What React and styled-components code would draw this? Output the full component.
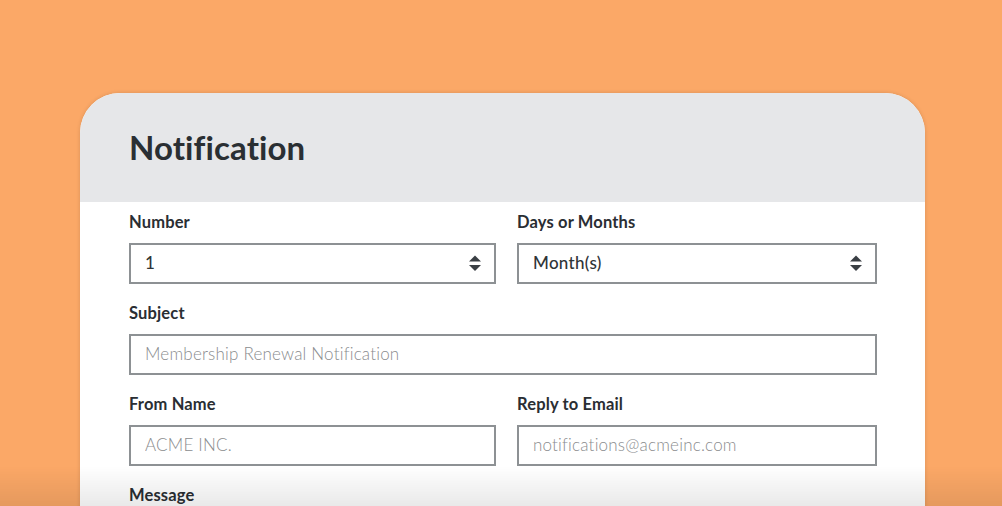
import React from "react";
import styled, { createGlobalStyle } from "styled-components";

// ─── global ──────────────────────────────────────────────

const GlobalStyle = createGlobalStyle`
  html, body {
    margin: 0;
    padding: 0;
    background: #fba867;
    font-family: Lato, "Open Sans", sans-serif;
  }
  * { box-sizing: border-box; }
`;

// ─── layout ──────────────────────────────────────────────

const Page = styled.div`
  height: 506px;
  overflow: hidden;
  padding: 93px 77px 0 80px;
`;

const Card = styled.section`
  background: #fff;
  border-radius: 40px 40px 0 0;
  box-shadow: 0 0 4px rgba(0, 0, 0, 0.14);
  overflow: hidden;
  min-height: 440px;
`;

const CardHeader = styled.header`
  height: 109px;
  background: #e6e7e9;
  display: flex;
  align-items: center;
  padding-left: 49px;
  padding-bottom: 2px;
`;

const Title = styled.h1`
  margin: 0;
  font-size: 33px;
  font-weight: 700;
  color: #2a2f33;
  letter-spacing: 0.1px;
`;

const FormGrid = styled.form`
  display: grid;
  grid-template-columns: 367px 360px;
  column-gap: 21px;
  row-gap: 19px;
  padding: 10px 48px 0 49px;
`;

const Field = styled.div`
  display: flex;
  flex-direction: column;
  grid-column: ${p => (p.$wide ? "1 / -1" : "auto")};
`;

const Label = styled.label`
  font-size: 16.5px;
  line-height: 20px;
  font-weight: 700;
  color: #2a2e33;
  margin-bottom: 11px;
  letter-spacing: 0.15px;
`;

const controlBase = `
  height: 41px;
  width: 100%;
  border: 2px solid #8d9194;
  border-radius: 0;
  background: #fff;
  padding: 0 14px 2px;
  font-family: Lato, "Open Sans", sans-serif;
  font-size: 17px;
  outline: none;
`;

const Input = styled.input`
  ${controlBase}
  color: #2f3437;
  &::placeholder {
    color: #8a8c8e;
    font-weight: 300;
    letter-spacing: 0.2px;
  }
`;

const SelectWrap = styled.div`
  position: relative;
`;

const Select = styled.select`
  ${controlBase}
  appearance: none;
  -webkit-appearance: none;
  color: #2f3437;
  font-weight: 500;
  letter-spacing: 0.3px;
`;

const Arrows = styled.svg`
  position: absolute;
  right: 14px;
  top: 12px;
  pointer-events: none;
`;

const BottomFade = styled.div`
  position: fixed;
  left: 0;
  right: 0;
  bottom: 0;
  height: 40px;
  background: linear-gradient(to bottom, rgba(0, 0, 0, 0), rgba(0, 0, 0, 0.085));
  pointer-events: none;
`;

// ─── component ───────────────────────────────────────────

function UpDown() {
  return (
    <Arrows width="14" height="17" viewBox="0 0 14 17">
      <path d="M7 0.5 L13 6.5 H1 Z" fill="#3a3f44" />
      <path d="M1 10 H13 L7 16 Z" fill="#3a3f44" />
    </Arrows>
  );
}

export default function App() {
  return (
    <>
      <GlobalStyle />
      <Page>
        <Card>
          <CardHeader>
            <Title>Notification</Title>
          </CardHeader>
          <FormGrid onSubmit={e => e.preventDefault()}>
            <Field>
              <Label>Number</Label>
              <SelectWrap>
                <Select defaultValue="1">
                  <option value="1">1</option>
                  <option value="2">2</option>
                  <option value="3">3</option>
                </Select>
                <UpDown />
              </SelectWrap>
            </Field>
            <Field>
              <Label>Days or Months</Label>
              <SelectWrap>
                <Select defaultValue="months">
                  <option value="days">Day(s)</option>
                  <option value="months">Month(s)</option>
                </Select>
                <UpDown />
              </SelectWrap>
            </Field>
            <Field $wide>
              <Label>Subject</Label>
              <Input placeholder="Membership Renewal Notification" />
            </Field>
            <Field>
              <Label>From Name</Label>
              <Input placeholder="ACME INC." />
            </Field>
            <Field>
              <Label>Reply to Email</Label>
              <Input placeholder="notifications@acmeinc.com" />
            </Field>
            <Field $wide>
              <Label>Message</Label>
            </Field>
          </FormGrid>
        </Card>
      </Page>
      <BottomFade />
    </>
  );
}
